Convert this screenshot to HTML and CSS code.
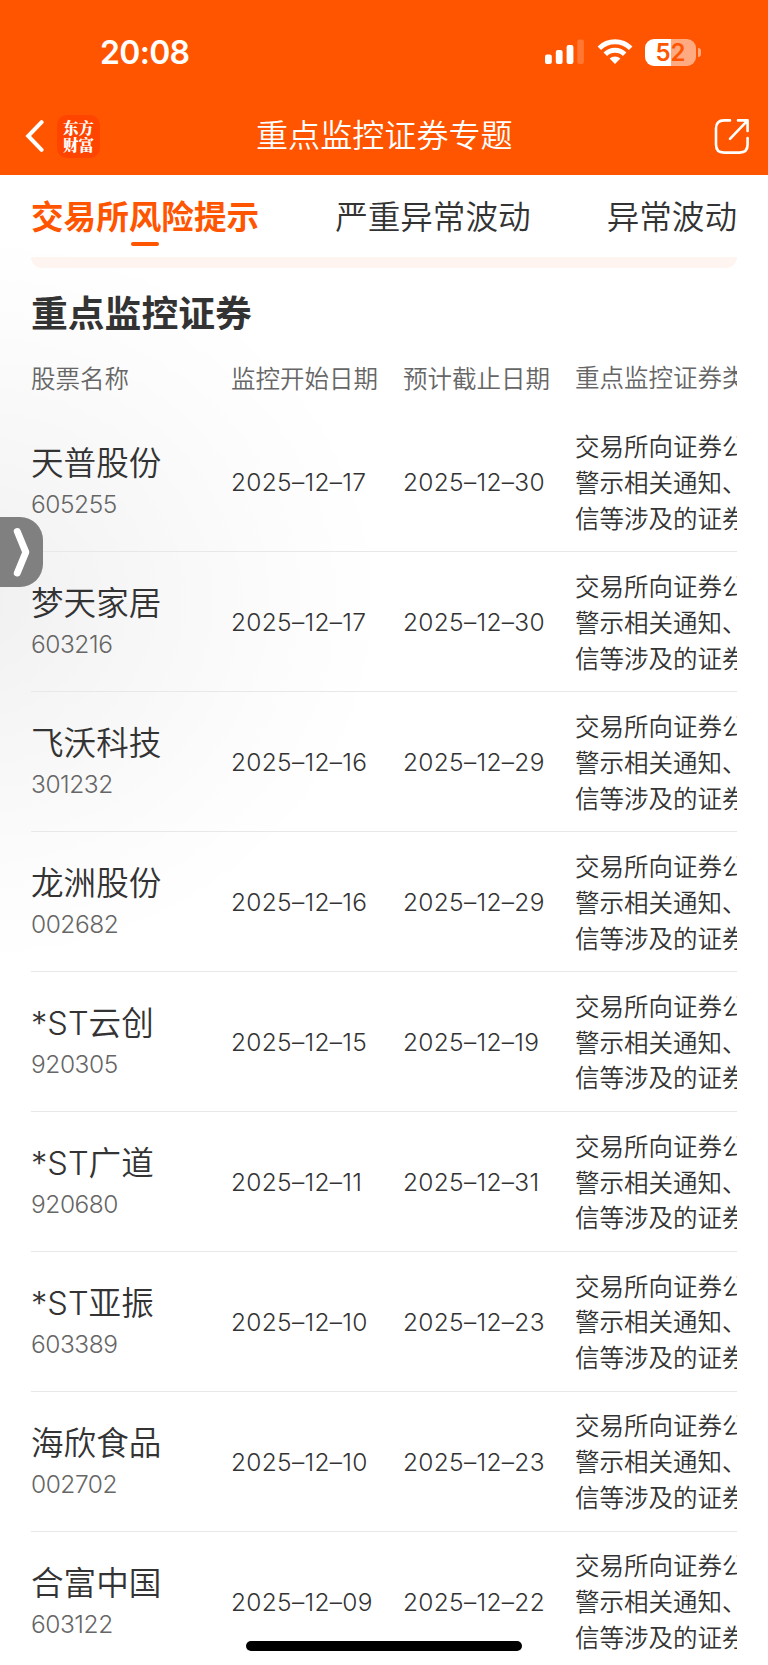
FILE: index.html
```html
<!DOCTYPE html>
<html lang="zh-CN">
<head>
    <meta charset="UTF-8">
    <meta name="viewport" content="width=device-width, initial-scale=1.0">
    <title>重点监控证券专题</title>
    <link rel="stylesheet" href="styles.css">
</head>
<body>
    <div class="app">
        <header class="header">
            <div class="status-bar">
                <span class="time">20:08</span>
                <div class="status-icons">
                    <svg class="signal" width="39" height="26" viewBox="0 0 39 26" fill="#fff">
                        <rect x="0" y="15.5" width="6.8" height="9.5" rx="2"/>
                        <rect x="10.8" y="11" width="6.8" height="14" rx="2"/>
                        <rect x="21.6" y="6" width="6.8" height="19" rx="2"/>
                        <rect x="32.3" y="0.5" width="6.6" height="24.5" rx="2" opacity="0.2"/>
                    </svg>
                    <svg class="wifi" width="36" height="26" viewBox="0 0 36 26" fill="none" stroke="#fff" stroke-width="5">
                        <path d="M2.3 9.2 A22.3 22.3 0 0 1 33.7 9.2"/>
                        <path d="M8.3 15.3 A13.7 13.7 0 0 1 27.7 15.3"/>
                        <path d="M12.6 19.6 A7.7 7.7 0 0 1 23.4 19.6 L18 25 Z" fill="#fff" stroke="none"/>
                    </svg>
                    <div class="battery"><span>52</span></div>
                    <div class="battery-tip"></div>
                </div>
            </div>
            <div class="nav-bar">
                <svg class="back" width="20" height="34" viewBox="0 0 20 34" fill="none" stroke="#fff" stroke-width="4" stroke-linecap="round" stroke-linejoin="miter">
                    <path d="M17.6 3.2 L4.2 17 L17.6 30.8"/>
                </svg>
                <div class="logo"><span>东方</span><span>财富</span></div>
                <h1>重点监控证券专题</h1>
                <svg class="share" width="37" height="37" viewBox="0 0 37 37" fill="none" stroke="#fff" stroke-width="2.6" stroke-linecap="round" stroke-linejoin="round">
                    <path d="M16 2.4 H10 Q2 2.4 2 10.5 V26.5 Q2 34.6 10 34.6 H25.5 Q33.6 34.6 33.6 26.5 V20"/>
                    <path d="M24 2.4 H33.6 V13 M33.2 2.8 L16 20.8"/>
                </svg>
            </div>
        </header>

        <nav class="tabs">
            <a class="tab active">交易所风险提示</a>
            <a class="tab">严重异常波动</a>
            <a class="tab">异常波动</a>
        </nav>

        <main class="content">
            <div class="notice"></div>
            <h2>重点监控证券</h2>
            <div class="row table-head">
                <span>股票名称</span>
                <span>监控开始日期</span>
                <span>预计截止日期</span>
                <span class="type">重点监控证券类</span>
            </div>
            <div class="row">
                <div class="stock"><b>天普股份</b><i>605255</i></div>
                <span class="date">2025–12–17</span>
                <span class="date">2025–12–30</span>
                <p class="type">交易所向证券公<br>警示相关通知、<br>信等涉及的证券</p>
            </div>
            <div class="row">
                <div class="stock"><b>梦天家居</b><i>603216</i></div>
                <span class="date">2025–12–17</span>
                <span class="date">2025–12–30</span>
                <p class="type">交易所向证券公<br>警示相关通知、<br>信等涉及的证券</p>
            </div>
            <div class="row">
                <div class="stock"><b>飞沃科技</b><i>301232</i></div>
                <span class="date">2025–12–16</span>
                <span class="date">2025–12–29</span>
                <p class="type">交易所向证券公<br>警示相关通知、<br>信等涉及的证券</p>
            </div>
            <div class="row">
                <div class="stock"><b>龙洲股份</b><i>002682</i></div>
                <span class="date">2025–12–16</span>
                <span class="date">2025–12–29</span>
                <p class="type">交易所向证券公<br>警示相关通知、<br>信等涉及的证券</p>
            </div>
            <div class="row">
                <div class="stock"><b>*ST云创</b><i>920305</i></div>
                <span class="date">2025–12–15</span>
                <span class="date">2025–12–19</span>
                <p class="type">交易所向证券公<br>警示相关通知、<br>信等涉及的证券</p>
            </div>
            <div class="row">
                <div class="stock"><b>*ST广道</b><i>920680</i></div>
                <span class="date">2025–12–11</span>
                <span class="date">2025–12–31</span>
                <p class="type">交易所向证券公<br>警示相关通知、<br>信等涉及的证券</p>
            </div>
            <div class="row">
                <div class="stock"><b>*ST亚振</b><i>603389</i></div>
                <span class="date">2025–12–10</span>
                <span class="date">2025–12–23</span>
                <p class="type">交易所向证券公<br>警示相关通知、<br>信等涉及的证券</p>
            </div>
            <div class="row">
                <div class="stock"><b>海欣食品</b><i>002702</i></div>
                <span class="date">2025–12–10</span>
                <span class="date">2025–12–23</span>
                <p class="type">交易所向证券公<br>警示相关通知、<br>信等涉及的证券</p>
            </div>
            <div class="row">
                <div class="stock"><b>合富中国</b><i>603122</i></div>
                <span class="date">2025–12–09</span>
                <span class="date">2025–12–22</span>
                <p class="type">交易所向证券公<br>警示相关通知、<br>信等涉及的证券</p>
            </div>
        </main>

        <!-- floating drawer handle -->
        <div class="drawer-handle">
            <svg width="43" height="70" viewBox="0 0 43 70" fill="none" stroke="#fff" stroke-width="7" stroke-linecap="round" stroke-linejoin="round">
                <path d="M17.3 14.5 L25.8 35.2 L17.3 56"/>
            </svg>
        </div>
        <div class="home-indicator"></div>
    </div>
</body>
</html>
```
FILE: styles.css
```css
:root {
    --primary-color: #ff5500;
    --text-color: #333;
    --muted-color: #666;
    --line-color: #e8e8e8;
}

* {
    box-sizing: border-box;
}

body {
    margin: 0;
    font-family: Inter, "Noto Sans CJK SC", sans-serif;
    color: var(--text-color);
    background: #fff;
}

.app {
    position: relative;
    width: 768px;
    height: 1665px;
    overflow: hidden;
    background: radial-gradient(ellipse 420px 370px at -30px 600px, rgba(0,0,0,0.06), rgba(0,0,0,0.035) 35%, rgba(0,0,0,0.01) 75%, rgba(0,0,0,0)) #fff;
}

.header {
    height: 175px;
    background-color: var(--primary-color);
    color: #fff;
}

.status-bar {
    display: flex;
    justify-content: space-between;
    align-items: center;
    height: 104px;
    padding: 0 67px 0 100px;
}

.time {
    padding-top: 2px;
    font-size: 32px;
    font-weight: 600;
    line-height: 40px;
    letter-spacing: -0.7px;
}

.status-icons {
    display: flex;
    align-items: center;
}

.wifi {
    margin: 0 12px 0 13px;
}

.battery {
    width: 51px;
    height: 27px;
    border-radius: 9px;
    background: linear-gradient(to right, #fff 51%, #ffaa80 51%);
    color: var(--primary-color);
    font-size: 24px;
    font-weight: 600;
    line-height: 27px;
    text-align: center;
}

.battery-tip {
    width: 3px;
    height: 9px;
    margin-left: 2px;
    border-radius: 0 4px 4px 0;
    background-color: #ffaa80;
}

.nav-bar {
    display: flex;
    align-items: center;
    height: 64px;
    padding: 0 17px 0 24px;
}

.logo {
    display: flex;
    flex-direction: column;
    justify-content: center;
    width: 43px;
    height: 43px;
    margin-left: 13px;
    border-radius: 10px;
    background-color: #ff4400;
    font-family: "Noto Serif CJK SC", "Noto Sans CJK SC", serif;
    font-size: 15.5px;
    font-weight: 900;
    line-height: 17.5px;
    text-align: center;
}

h1 {
    flex: 1;
    margin: 0 0 0 156px;
    font-size: 32.1px;
    font-weight: 350;
    line-height: 44px;
}

.tabs {
    display: flex;
    justify-content: space-between;
    height: 82px;
    padding: 17.5px 31px 0;
}

.tab {
    display: flex;
    flex-direction: column;
    align-items: center;
    font-size: 32.6px;
    font-weight: 350;
    line-height: 48px;
}

.active {
    color: var(--primary-color);
    font-weight: 700;
}

.active::after {
    content: "";
    width: 28px;
    height: 4.5px;
    margin-top: 1px;
    border-radius: 3px;
    background-color: var(--primary-color);
}

.content {
    padding: 0 31px;
}

.notice {
    height: 11px;
    border-radius: 0 0 12px 12px;
    background-color: #fff5f0;
}

h2 {
    margin: 21px 0 0;
    font-size: 36.8px;
    font-weight: 700;
    line-height: 50px;
}

.row {
    display: grid;
    grid-template-columns: 200px 172px 172px 1fr;
    align-items: center;
    height: 139.9px;
    border-bottom: 1px solid var(--line-color);
    font-size: 24.5px;
}

.table-head {
    height: 73.5px;
    padding-top: 3px;
    border: 0;
    color: var(--muted-color);
    font-weight: 350;
}

.stock b {
    display: block;
    font-size: 32.6px;
    font-weight: 350;
    line-height: 45px;
}

.stock i {
    display: block;
    color: var(--muted-color);
    font-style: normal;
    font-weight: 350;
    line-height: 36px;
    letter-spacing: -0.45px;
}

.date {
    padding-top: 1px;
    font-weight: 350;
    letter-spacing: 0.3px;
}

.type {
    margin: 0;
    padding-top: 4px;
    overflow: hidden;
    white-space: nowrap;
    font-weight: 350;
    line-height: 35.8px;
}

.drawer-handle {
    position: absolute;
    left: 0;
    top: 517px;
    width: 43px;
    height: 70px;
    border-radius: 0 23px 23px 0;
    background-color: #808080;
}

.home-indicator {
    position: absolute;
    left: 246px;
    bottom: 14px;
    width: 276px;
    height: 10px;
    border-radius: 5px;
    background-color: #000;
}
```
